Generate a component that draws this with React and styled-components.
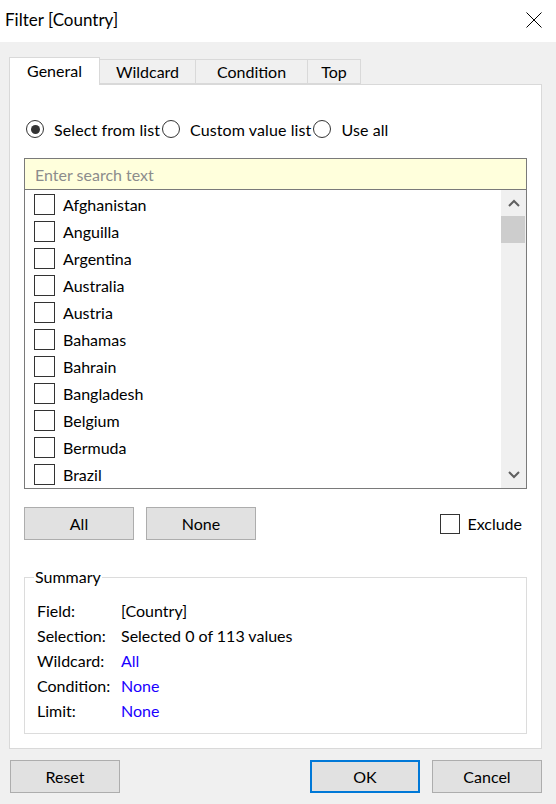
import React from "react";
import styled, { createGlobalStyle } from "styled-components";

const GlobalStyle = createGlobalStyle`
  html, body {
    margin: 0;
    padding: 0;
    background: #f0f0f0;
  }
  * {
    box-sizing: border-box;
  }
  body {
    font-family: Lato, "Open Sans", "Liberation Sans", sans-serif;
    font-size: 16px;
    color: #000000;
  }
`;

const Dialog = styled.div`
  display: flex;
  flex-direction: column;
  width: 556px;
  height: 804px;
  background: #f0f0f0;
`;

const TitleBar = styled.div`
  display: flex;
  align-items: center;
  justify-content: space-between;
  height: 42px;
  padding: 0 14px 0 5px;
  background: #ffffff;
`;

const TitleText = styled.div`
  font-size: 17px;
  line-height: 20px;
  margin-top: -2px;
`;

const CloseIcon = styled.svg`
  width: 16px;
  height: 16px;
  margin-top: -2px;
`;

const Body = styled.div`
  display: flex;
  flex-direction: column;
  padding: 16px 14px 0 9px;
`;

const TabStrip = styled.div`
  display: flex;
  align-items: flex-end;
  height: 26px;
  padding-left: 1px;
  position: relative;
  z-index: 1;
`;

const Tab = styled.div`
  display: flex;
  align-items: center;
  justify-content: center;
  width: ${(p) => p.$w}px;
  height: ${(p) => (p.$active ? 28 : 25)}px;
  margin-bottom: ${(p) => (p.$active ? -1 : 0)}px;
  padding-bottom: ${(p) => (p.$active ? 3 : 0)}px;
  background: ${(p) => (p.$active ? "#ffffff" : "#f0f0f0")};
  border: 1px solid #d9d9d9;
  border-bottom: ${(p) => (p.$active ? "none" : "1px solid #d9d9d9")};
  margin-left: -1px;
  font-size: 16px;
`;

const Panel = styled.div`
  display: flex;
  flex-direction: column;
  height: 665px;
  padding: 0 14px;
  background: #ffffff;
  border: 1px solid #d9d9d9;
`;

const RadioRow = styled.div`
  display: flex;
  align-items: center;
  height: 18px;
  margin-top: 35px;
  padding-left: 2px;
`;

const RadioLabel = styled.label`
  display: flex;
  align-items: center;
  gap: 10px;
  margin-right: 2px;
  font-size: 16px;
  letter-spacing: 0.1px;
`;

const RadioCircle = styled.span`
  display: flex;
  align-items: center;
  justify-content: center;
  width: 18px;
  height: 18px;
  border: 1px solid #333333;
  border-radius: 50%;
  &::after {
    content: "";
    display: ${(p) => (p.$on ? "block" : "none")};
    width: 9px;
    height: 9px;
    border-radius: 50%;
    background: #333333;
  }
`;

const ListFrame = styled.div`
  display: flex;
  flex-direction: column;
  margin-top: 20px;
  border: 1px solid #7a7a7a;
`;

const SearchBox = styled.div`
  display: flex;
  align-items: center;
  height: 31px;
  padding-left: 10px;
  background: #ffffdc;
  border-bottom: 1px solid #7a7a7a;
  color: #8c8c8c;
  font-size: 16px;
`;

const ListArea = styled.div`
  display: flex;
  height: 298px;
`;

const Items = styled.div`
  flex: 1;
  display: flex;
  flex-direction: column;
  padding-top: 1px;
`;

const ItemRow = styled.div`
  display: flex;
  align-items: center;
  gap: 8px;
  height: 27px;
  padding-left: 9px;
  font-size: 16px;
`;

const CheckBox = styled.span`
  display: block;
  width: 21px;
  height: 21px;
  border: 1px solid #333333;
  background: #ffffff;
`;

const ScrollBar = styled.div`
  display: flex;
  flex-direction: column;
  width: 25px;
  background: #f0f0f0;
`;

const ScrollArrow = styled.div`
  display: flex;
  align-items: center;
  justify-content: center;
  height: 26px;
`;

const ScrollThumb = styled.div`
  height: 27px;
  margin: 0 1px 0 0;
  background: #cdcdcd;
`;

const ScrollTrack = styled.div`
  flex: 1;
`;

const ActionRow = styled.div`
  display: flex;
  align-items: center;
  margin-top: 18px;
  height: 33px;
`;

const Button = styled.div`
  display: flex;
  align-items: center;
  justify-content: center;
  width: 110px;
  height: 33px;
  margin-right: ${(p) => p.$gap || 0}px;
  background: #e1e1e1;
  border: ${(p) => (p.$primary ? "2px solid #0078d7" : "1px solid #adadad")};
  font-size: 16px;
`;

const ExcludeLabel = styled.label`
  display: flex;
  align-items: center;
  gap: 7px;
  margin-left: auto;
  margin-right: 5px;
  font-size: 16px;
`;

const SmallBox = styled.span`
  display: block;
  width: 20px;
  height: 20px;
  border: 1px solid #333333;
`;

const Group = styled.fieldset`
  margin: 28px 0 0 0;
  padding: 12px 12px 10px 12px;
  border: 1px solid #dcdcdc;
  min-width: 0;
`;

const Legend = styled.legend`
  padding: 0 1px;
  margin-left: -3px;
  font-size: 16px;
  line-height: 18px;
`;

const SummaryGrid = styled.div`
  display: grid;
  grid-template-columns: 84px 1fr;
  grid-auto-rows: 25px;
  align-items: center;
  font-size: 16px;
`;

const Value = styled.span`
  color: ${(p) => (p.$link ? "#1a00ff" : "#000000")};
`;

const Footer = styled.div`
  display: flex;
  align-items: center;
  padding: 11px 14px 0 10px;
`;

const Spacer = styled.div`
  flex: 1;
`;

const tabs = [
  { label: "General", w: 91, active: true },
  { label: "Wildcard", w: 97 },
  { label: "Condition", w: 113 },
  { label: "Top", w: 54 },
];

const countries = [
  "Afghanistan",
  "Anguilla",
  "Argentina",
  "Australia",
  "Austria",
  "Bahamas",
  "Bahrain",
  "Bangladesh",
  "Belgium",
  "Bermuda",
  "Brazil",
];

const summary = [
  { label: "Field:", value: "[Country]" },
  { label: "Selection:", value: "Selected 0 of 113 values" },
  { label: "Wildcard:", value: "All", link: true },
  { label: "Condition:", value: "None", link: true },
  { label: "Limit:", value: "None", link: true },
];

const Chevron = ({ up }) => (
  <svg width="12" height="8" viewBox="0 0 12 8">
    <path
      d={up ? "M1 7 L6 2 L11 7" : "M1 1 L6 6 L11 1"}
      fill="none"
      stroke="#606060"
      strokeWidth="2"
    />
  </svg>
);

export default function App() {
  return (
    <Dialog>
      <GlobalStyle />
      <TitleBar>
        <TitleText>Filter [Country]</TitleText>
        <CloseIcon viewBox="0 0 16 16">
          <path d="M0.5 0.5 L15.5 15.5 M15.5 0.5 L0.5 15.5" stroke="#000" strokeWidth="1" />
        </CloseIcon>
      </TitleBar>
      <Body>
        <TabStrip>
          {tabs.map((t) => (
            <Tab key={t.label} $w={t.w} $active={t.active}>
              {t.label}
            </Tab>
          ))}
        </TabStrip>
        <Panel>
          <RadioRow>
            <RadioLabel>
              <RadioCircle $on />
              Select from list
            </RadioLabel>
            <RadioLabel>
              <RadioCircle />
              Custom value list
            </RadioLabel>
            <RadioLabel>
              <RadioCircle />
              Use all
            </RadioLabel>
          </RadioRow>
          <ListFrame>
            <SearchBox>Enter search text</SearchBox>
            <ListArea>
              <Items>
                {countries.map((c) => (
                  <ItemRow key={c}>
                    <CheckBox />
                    {c}
                  </ItemRow>
                ))}
              </Items>
              <ScrollBar>
                <ScrollArrow>
                  <Chevron up />
                </ScrollArrow>
                <ScrollThumb />
                <ScrollTrack />
                <ScrollArrow>
                  <Chevron />
                </ScrollArrow>
              </ScrollBar>
            </ListArea>
          </ListFrame>
          <ActionRow>
            <Button $gap={12}>All</Button>
            <Button>None</Button>
            <ExcludeLabel>
              <SmallBox />
              Exclude
            </ExcludeLabel>
          </ActionRow>
          <Group>
            <Legend>Summary</Legend>
            <SummaryGrid>
              {summary.map((s) => (
                <React.Fragment key={s.label}>
                  <span>{s.label}</span>
                  <Value $link={s.link}>{s.value}</Value>
                </React.Fragment>
              ))}
            </SummaryGrid>
          </Group>
        </Panel>
      </Body>
      <Footer>
        <Button>Reset</Button>
        <Spacer />
        <Button $primary $gap={12}>
          OK
        </Button>
        <Button>Cancel</Button>
      </Footer>
    </Dialog>
  );
}
